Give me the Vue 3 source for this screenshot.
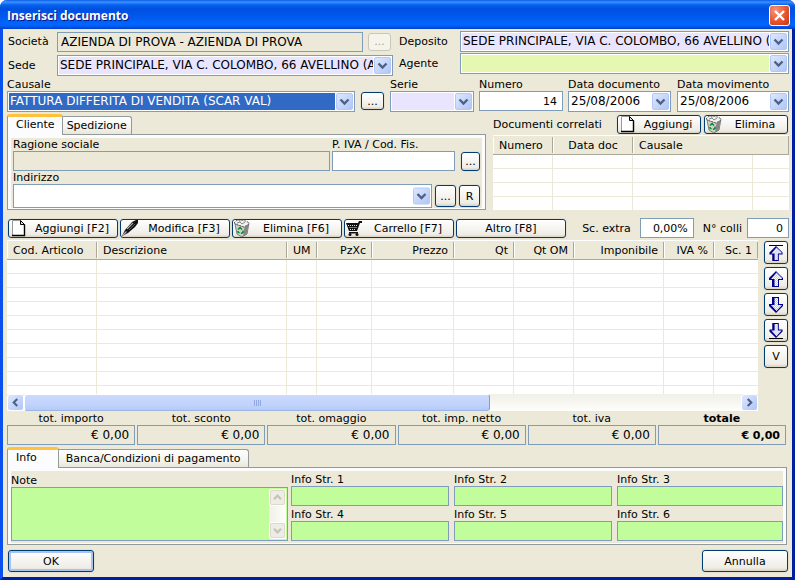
<script setup>
import { ref } from 'vue'

const company = ref('AZIENDA DI PROVA - AZIENDA DI PROVA')
const number = ref('14')
const extraDiscount = ref('0,00%')
const parcels = ref('0')
const notes = ref('')

const tools = [
  { text: 'Aggiungi [F2]', icon: 'page' },
  { text: 'Modifica [F3]', icon: 'pen' },
  { text: 'Elimina [F6]', icon: 'bin' },
  { text: 'Carrello [F7]', icon: 'cart' },
  { text: 'Altro [F8]', icon: '' }
]

const columns = [
  { text: 'Cod. Articolo', size: 'w90', align: 'left' },
  { text: 'Descrizione', size: '', align: 'left' },
  { text: 'UM', size: 'w30', align: 'left' },
  { text: 'PzXc', size: 'w55', align: 'right' },
  { text: 'Prezzo', size: 'w82', align: 'right' },
  { text: 'Qt', size: 'w60', align: 'right' },
  { text: 'Qt OM', size: 'w60', align: 'right' },
  { text: 'Imponibile', size: 'w90', align: 'right' },
  { text: 'IVA %', size: 'w50', align: 'right' },
  { text: 'Sc. 1', size: 'w44', align: 'right' }
]

const movers = [
  { icon: 'first', label: 'Sposta in cima' },
  { icon: 'up', label: 'Sposta su' },
  { icon: 'down', label: 'Sposta giù' },
  { icon: 'last', label: 'Sposta in fondo' }
]

const totals = [
  { id: 'importo', text: 'tot. importo' },
  { id: 'sconto', text: 'tot. sconto' },
  { id: 'omaggio', text: 'tot. omaggio' },
  { id: 'netto', text: 'tot. imp. netto' },
  { id: 'iva', text: 'tot. iva' },
  { id: 'totale', text: 'totale', strong: true }
]
</script>

<template>
  <svg class="sprites" aria-hidden="true">
    <symbol id="page" viewBox="0 0 18 18">
      <path d="M3.500 1.500h8l4 4v11h-12z" fill="#fff" stroke="#9a9a9a" />
      <path d="M11.500 1.500v4h4z" fill="#ddd" stroke="#000" />
      <path d="M15.500 5.500v11H3" fill="none" stroke="#000" stroke-width="1.400" />
    </symbol>
    <symbol id="pen" viewBox="0 0 18 18">
      <path d="M1 17l3-6 7-8 4-2h2v3l-3 4-7 6z" fill="#111" />
      <path d="M6 10l6-6M1.500 16.500l4-4" stroke="#aaa" stroke-width="1.200" />
      <path d="M8 11l6-6" stroke="#555" />
    </symbol>
    <symbol id="bin" viewBox="0 0 18 18">
      <path d="M2 5l9 3 5-4-2 11-5 3-5-3z" fill="#d0d0d0" stroke="#666" stroke-width=".8" />
      <path d="M11.500 8l4-3.500-1.500 10-4 3z" fill="#858585" />
      <path d="M1 4l3-3 3 1 3-1 5 2 1 2-5 3-6-2z" fill="#f0f0f0" stroke="#555" stroke-width=".9" stroke-dasharray="2 1" />
      <path d="M4 4l3-1 2 2 3-2" fill="none" stroke="#888" />
      <path d="M5 10.500l2-2 2 2M10 11.500v2l-2 1M6.500 14l-1.500-1v-1" fill="none" stroke="#00931c" stroke-width="1.500" />
    </symbol>
    <symbol id="cart" viewBox="0 0 18 18">
      <path d="M1 4h12l1-2h3v2h-2l-3 8H4z" fill="#111" />
      <path d="M3 6.500h9M4.500 8.500h7M5 10.500h6" stroke="#ddd" stroke-dasharray="1 1" />
      <path d="M4 13h9v1.500H4z" fill="#111" />
      <circle cx="5" cy="15.500" r="1.500" fill="#111" /><circle cx="12" cy="15.500" r="1.500" fill="#111" />
    </symbol>
    <pattern id="dither" width="2" height="2" patternUnits="userSpaceOnUse">
      <rect width="2" height="2" fill="#fff" />
      <path d="M0 0h1v1H0zM1 1h1v1H1z" fill="#c4c4dc" />
    </pattern>
    <symbol id="up" viewBox="0 0 16 16">
      <path d="M8 0l7 7v2h-4v7H4V9H1V7z" fill="#000090" />
      <path d="M8.500 1.500L14 7v1h-4v7H6.500V8H3z" fill="url(#dither)" />
    </symbol>
    <symbol id="down" viewBox="0 0 16 16">
      <path d="M4 0h7v7h4v2l-7 7-7-7V7h3z" fill="#000090" />
      <path d="M6.500 1H10v7h4l-5.500 6L3 8h3.500z" fill="url(#dither)" />
    </symbol>
    <symbol id="first" viewBox="0 0 16 16">
      <use href="#up" y="1" width="16" height="15" /><path d="M1 .5h14" stroke="#000" />
    </symbol>
    <symbol id="last" viewBox="0 0 16 16">
      <use href="#down" width="16" height="15" /><path d="M1 15.500h14" stroke="#000" />
    </symbol>
    <symbol id="drop" viewBox="0 0 17 17">
      <rect x=".5" y=".5" width="16" height="16" rx="1.500" fill="url(#blue)" stroke="#b4c8f6" />
      <path d="M4.500 6.500l4 4 4-4" fill="none" stroke="#4d6185" stroke-width="2.400" />
    </symbol>
    <linearGradient id="blue" x2="1" y2="1">
      <stop stop-color="#dfe8ff" /><stop offset="1" stop-color="#aec5f7" />
    </linearGradient>
  </svg>

  <main class="window">
    <header class="title">
      <h1>Inserisci documento</h1>
      <button class="close" aria-label="Chiudi">
        <svg viewBox="0 0 19 19"><path d="M5 5l9 9M14 5l-9 9" stroke="#fff" stroke-width="2.400" /></svg>
      </button>
    </header>

    <div class="body">
      <section class="top">
        <div class="seat">
          <label for="company">Società</label>
          <div class="line">
            <input id="company" v-model="company" class="box flat" readonly />
            <button class="btn dots" disabled>...</button>
          </div>
          <label for="seat">Sede</label>
          <span class="combo lilac">
            <select id="seat"><option>SEDE PRINCIPALE, VIA C. COLOMBO, 66 AVELLINO (AV)</option></select>
            <svg><use href="#drop" /></svg>
          </span>
        </div>
        <div class="depot">
          <label for="depot">Deposito</label>
          <span class="combo lilac">
            <select id="depot"><option>SEDE PRINCIPALE, VIA C. COLOMBO, 66 AVELLINO (AV)</option></select>
            <svg><use href="#drop" /></svg>
          </span>
          <label for="agent">Agente</label>
          <span class="combo lime">
            <select id="agent"><option></option></select>
            <svg><use href="#drop" /></svg>
          </span>
        </div>
      </section>

      <section class="heads">
        <div class="field">
          <label for="reason">Causale</label>
          <span class="combo picked">
            <select id="reason"><option>FATTURA DIFFERITA DI VENDITA (SCAR VAL)</option></select>
            <svg><use href="#drop" /></svg>
          </span>
        </div>
        <button class="btn dots">...</button>
        <div class="field inset">
          <label for="series">Serie</label>
          <span class="combo lilac">
            <select id="series"><option></option></select>
            <svg><use href="#drop" /></svg>
          </span>
        </div>
        <div class="field">
          <label for="number">Numero</label>
          <input id="number" v-model="number" class="box num" />
        </div>
        <div class="field">
          <label for="docdate">Data documento</label>
          <span class="combo">
            <select id="docdate"><option>25/08/2006</option></select>
            <svg><use href="#drop" /></svg>
          </span>
        </div>
        <div class="field inset">
          <label for="movdate">Data movimento</label>
          <span class="combo">
            <select id="movdate"><option>25/08/2006</option></select>
            <svg><use href="#drop" /></svg>
          </span>
        </div>
      </section>

      <section class="middle">
        <div>
          <div class="tabs" role="tablist">
            <button class="tab on" role="tab" aria-selected="true">Cliente</button>
            <button class="tab" role="tab" aria-selected="false">Spedizione</button>
          </div>
          <div class="pane">
            <div class="inner client">
              <div class="client-row">
                <div class="field">
                  <label for="name">Ragione sociale</label>
                  <input id="name" class="box flat" readonly />
                </div>
                <div class="field">
                  <label for="vat">P. IVA / Cod. Fis.</label>
                  <input id="vat" class="box" />
                </div>
                <button class="btn square">...</button>
              </div>
              <label for="address">Indirizzo</label>
              <div class="address-row">
                <span class="combo">
                  <select id="address"><option></option></select>
                  <svg><use href="#drop" /></svg>
                </span>
                <button class="btn">...</button>
                <button class="btn">R</button>
              </div>
            </div>
          </div>
        </div>

        <div class="related">
          <div class="related-head">
            <span>Documenti correlati</span>
            <button class="btn tool"><svg><use href="#page" /></svg><span>Aggiungi</span></button>
            <button class="btn tool"><svg><use href="#bin" /></svg><span>Elimina</span></button>
          </div>
          <table>
            <colgroup><col class="w60" /><col class="w80" /><col /><col class="w36" /></colgroup>
            <thead>
              <tr>
                <th class="left">Numero</th>
                <th class="center">Data doc</th>
                <th class="left joined">Causale</th>
                <th></th>
              </tr>
            </thead>
            <tbody>
              <tr v-for="r in 4" :key="r"><td v-for="c in 4" :key="c"></td></tr>
            </tbody>
          </table>
        </div>
      </section>

      <section class="tools">
        <button v-for="t in tools" :key="t.text" class="btn tool">
          <svg v-if="t.icon"><use :href="'#' + t.icon" /></svg><span>{{ t.text }}</span>
        </button>
        <label for="extra" class="push">Sc. extra</label>
        <input id="extra" v-model="extraDiscount" class="box num extra" />
        <label for="parcels">N° colli</label>
        <input id="parcels" v-model="parcels" class="box num parcels" />
      </section>

      <section class="items">
        <div class="grid">
          <div class="view">
            <table>
              <colgroup><col v-for="c in columns" :key="c.text" :class="c.size" /></colgroup>
              <thead>
                <tr><th v-for="c in columns" :key="c.text" :class="c.align">{{ c.text }}</th></tr>
              </thead>
              <tbody>
                <tr v-for="r in 10" :key="r"><td v-for="c in columns" :key="c.text"></td></tr>
              </tbody>
            </table>
          </div>
          <div class="scroll">
            <button class="step" aria-label="Scorri a sinistra">
              <svg viewBox="0 0 17 17"><path d="M10.500 4.500l-4 4 4 4" /></svg>
            </button>
            <div class="track"><div class="thumb"><i></i><i></i><i></i><i></i></div></div>
            <button class="step" aria-label="Scorri a destra">
              <svg viewBox="0 0 17 17"><path d="M6.500 4.500l4 4-4 4" /></svg>
            </button>
          </div>
        </div>
        <div class="movers">
          <button v-for="m in movers" :key="m.icon" class="btn" :aria-label="m.label">
            <svg><use :href="'#' + m.icon" /></svg>
          </button>
          <button class="btn">V</button>
        </div>
      </section>

      <section class="totals">
        <div v-for="t in totals" :key="t.id" class="field" :class="{ strong: t.strong }">
          <label :for="t.id">{{ t.text }}</label>
          <input :id="t.id" class="box flat" value="€ 0,00" readonly />
        </div>
      </section>

      <section class="extras">
        <div class="tabs" role="tablist">
          <button class="tab on" role="tab" aria-selected="true">Info</button>
          <button class="tab" role="tab" aria-selected="false">Banca/Condizioni di pagamento</button>
        </div>
        <div class="pane">
          <div class="inner info">
            <div class="field note">
              <label for="note">Note</label>
              <div class="area">
                <textarea id="note" v-model="notes"></textarea>
                <div class="vscroll" aria-hidden="true">
                  <svg viewBox="0 0 17 17"><path d="M4.500 10.500l4-4 4 4" /></svg>
                  <svg viewBox="0 0 17 17"><path d="M4.500 6.500l4 4 4-4" /></svg>
                </div>
              </div>
            </div>
            <div class="strings">
              <div v-for="n in 6" :key="n" class="field">
                <label :for="'str' + n">Info Str. {{ n }}</label>
                <input :id="'str' + n" class="box green" />
              </div>
            </div>
          </div>
        </div>
      </section>

      <footer>
        <button class="btn default">OK</button>
        <button class="btn">Annulla</button>
      </footer>
    </div>
  </main>
</template>

<style>
body {
  background: #fff;
}
</style>

<style scoped>
* {
  box-sizing: border-box;
}
.sprites {
  position: absolute;
  width: 0;
  height: 0;
}
.window,
button,
input,
select,
textarea {
  font: 11px/13px Verdana, "DejaVu Sans", sans-serif;
  color: #000;
}
button,
input,
select,
textarea {
  margin: 0;
  padding: 0;
  min-width: 0;
  border: 0;
  border-radius: 0;
  outline: 0;
}
input,
select,
textarea {
  font-size: 12px;
}
label,
span {
  white-space: nowrap;
}
.window {
  background: #ece9d8;
  border: solid #0a3fe0;
  border-width: 0 3px 3px;
  border-color: #0a3fe0 #001ea0 #001ea0 #0a50ee;
  border-radius: 7px 7px 0 0;
}
.title {
  display: flex;
  align-items: center;
  justify-content: space-between;
  height: 29px;
  margin: 0 -3px;
  padding: 2px 5px 0 7px;
  border-radius: 7px 7px 0 0;
  background: linear-gradient(#0a5be8 0, #3a92ff 2px, #0560ee 5px, #0050e0 9px, #0059ef 17px, #0066ff 24px, #0060f8 26px, #003dc4 29px);
}
h1 {
  margin: 0;
  font: bold 12px/18px "Open Sans", sans-serif;
  color: #fff;
  text-shadow: 1px 1px 0 #0a1883;
}
.close {
  width: 21px;
  height: 21px;
  border: 1px solid #fff;
  border-radius: 3px;
  background: radial-gradient(circle at 30% 25%, #f0977c, #e2512c 60%, #c23b12);
}
.close svg {
  display: block;
  width: 19px;
  height: 19px;
}
.body {
  padding: 2px 3px 5px 4px;
}

/* text boxes and drop-downs */
.box {
  display: block;
  width: 100%;
  height: 20px;
  padding: 0 3px;
  border: 1px solid #7f9db9;
  background: #fff;
}
.box.flat {
  background: #ece9d8;
}
.box.green {
  background: #c1fd9b;
}
.num {
  padding-right: 5px;
  font-size: 11px;
  text-align: right;
}
.combo {
  display: grid;
  grid-template-columns: 1fr 18px;
  height: 21px;
  padding: 1px;
  border: 1px solid #7f9db9;
  background: #fff;
}
.combo select {
  grid-area: 1 / 1 / 2 / 3;
  appearance: none;
  width: 100%;
  height: 100%;
  padding: 0 18px 0 1px;
  background: #fff;
}
.combo svg {
  grid-area: 1 / 2;
  width: 18px;
  height: 100%;
  padding-left: 1px;
  background: #fff;
  pointer-events: none;
}
.combo.lilac select {
  background: #e9e5ff;
}
.combo.lime select {
  background: #e5f7b1;
}
.combo.picked select {
  background: #316ac5;
  color: #fff;
}
.btn {
  display: flex;
  align-items: center;
  justify-content: center;
  border: 1px solid #003c74;
  border-radius: 3px;
  background: linear-gradient(#fff, #f5f4f0 50%, #eeece4 85%, #d8d1c3);
  box-shadow: 0 0 0 1px #e3e0d0;
}
.btn:disabled {
  border-color: #c9c7ba;
  background: #f5f4ea;
  color: #a1a192;
  box-shadow: none;
}
.dots {
  flex: none;
  width: 23px;
  height: 18px;
}
.field {
  min-width: 0;
}
.field > label {
  display: block;
}

/* first rows */
.top {
  display: grid;
  grid-template-columns: 386fr 390fr;
  column-gap: 6px;
}
.seat,
.depot {
  display: grid;
  grid-template-rows: 21px 21px;
  align-content: start;
  align-items: center;
}
.seat {
  grid-template-columns: 50px minmax(0, 1fr);
  row-gap: 3px;
}
.seat label {
  padding-left: 1px;
}
.depot {
  grid-template-columns: 61px minmax(0, 1fr);
  row-gap: 1px;
}
.line {
  display: flex;
  align-items: center;
  gap: 5px;
  padding-right: 2px;
}
.heads {
  display: grid;
  grid-template-columns: minmax(0, 1fr) 24px 85px 84px 103px 113px;
  column-gap: 5px;
  align-items: start;
  margin-top: 2px;
}
.heads .dots {
  margin: 14px 0 0 1px;
}
.inset {
  padding-left: 1px;
}

/* tabs */
.middle {
  display: grid;
  grid-template-columns: minmax(0, 479fr) minmax(0, 296fr);
  column-gap: 7px;
  margin-top: 2px;
}
.tabs {
  display: flex;
  align-items: flex-end;
  height: 20px;
}
.tab {
  height: 18px;
  padding: 0 4px;
  border: 1px solid #919b9c;
  border-bottom: 0;
  border-left-width: 0;
  border-radius: 0 3px 0 0;
  background: linear-gradient(#fff, #f4f3ec 60%, #e9e7dc);
  white-space: nowrap;
}
.tab.on {
  position: relative;
  height: 21px;
  margin-bottom: -1px;
  padding: 0 7px 3px 8px;
  border-left-width: 1px;
  border-top: 3px solid #ffc23a;
  border-radius: 3px 3px 0 0;
  background: #fcfcfe;
}
.extras .tab {
  padding: 0 7px;
}
.extras .tab.on {
  padding: 0 21px 3px 8px;
}
.pane {
  padding: 3px 3px 1px;
  border: 1px solid #919b9c;
  background: #fcfcfe;
}
.inner {
  background: #ece9d8;
}
.client {
  padding: 0 2px;
}
.client label {
  display: block;
}
.client-row {
  display: grid;
  grid-template-columns: minmax(0, 1fr) 123px 23px;
  column-gap: 2px;
  align-items: end;
}
.square {
  height: 19px;
  margin-left: 4px;
}
.address-row {
  display: grid;
  grid-template-columns: minmax(0, 1fr) 21px 21px;
  column-gap: 3px;
  align-items: center;
}
.address-row .combo {
  height: 24px;
}
.address-row .btn {
  height: 22px;
}

/* tables */
.related-head {
  display: grid;
  grid-template-columns: minmax(0, 1fr) 84px 84px;
  column-gap: 3px;
  align-items: center;
  height: 20px;
  padding-right: 1px;
}
table {
  width: 100%;
  table-layout: fixed;
  border-collapse: separate;
  border-spacing: 0;
  background: #fff;
}
th {
  height: 20px;
  padding: 0 6px;
  border-top: 1px solid #fff;
  border-bottom: 1px solid #aca899;
  background: linear-gradient(#aca899, #aca899) right center / 1px 16px no-repeat, linear-gradient(#fff, #fff) left center / 1px 16px no-repeat, #ece9d8;
  font-weight: normal;
  white-space: nowrap;
}
th.joined {
  background: linear-gradient(#fff, #fff) left center / 1px 16px no-repeat, #ece9d8;
}
th.joined + th {
  background: linear-gradient(#aca899, #aca899) right center / 1px 100% no-repeat, #ece9d8;
}
td {
  height: 14px;
  padding: 0;
  border: solid #ece9d8;
  border-width: 0 1px 1px 0;
}
td:last-child {
  border-right: 0;
}
.left {
  text-align: left;
}
.center {
  text-align: center;
}
.right {
  text-align: right;
}
.related table {
  margin-top: 1px;
}
.w30 { width: 30px; }
.w36 { width: 36px; }
.w44 { width: 44px; }
.w50 { width: 50px; }
.w55 { width: 55px; }
.w60 { width: 60px; }
.w80 { width: 80px; }
.w82 { width: 82px; }
.w90 { width: 90px; }

/* command bar */
.tool {
  height: 19px;
}
.tool svg {
  flex: none;
  width: 18px;
  height: 18px;
}
.tool span {
  flex: 1;
  text-align: center;
}
.tools {
  display: flex;
  align-items: center;
  gap: 2px;
  height: 20px;
  margin-top: 7px;
  padding-left: 1px;
}
.tools .tool {
  width: 110px;
}
.push {
  margin-left: auto;
}
.extra {
  width: 54px;
  margin: 0 7px;
}
.parcels {
  width: 42px;
  margin-left: 3px;
}

/* item grid */
.items {
  display: grid;
  grid-template-columns: minmax(0, 1fr) 24px;
  column-gap: 6px;
  margin-top: 2px;
  padding-right: 1px;
}
.view {
  height: 154px;
  overflow: hidden;
}
.scroll {
  display: flex;
  height: 17px;
  background: linear-gradient(#f0efe8, #fefefb);
}
.step {
  width: 17px;
  height: 17px;
  border: 1px solid #fff;
  border-radius: 3px;
  background: linear-gradient(135deg, #dfe8ff, #aec5f7);
}
.step svg {
  display: block;
  width: 15px;
  height: 15px;
}
.step path {
  fill: none;
  stroke: #4d6185;
  stroke-width: 2.4;
}
.track {
  flex: 1;
}
.thumb {
  display: flex;
  align-items: center;
  justify-content: center;
  gap: 1px;
  width: 65%;
  height: 17px;
  border: 1px solid #fff;
  border-right-color: #7f9dd0;
  border-bottom-color: #9db5e0;
  border-radius: 3px;
  background: linear-gradient(#cbdafe, #c2d3fc 60%, #b3cbfa);
}
.thumb i {
  width: 1px;
  height: 6px;
  background: #8fa9e0;
}
.movers {
  display: grid;
  grid-auto-rows: 23px;
  row-gap: 3px;
  align-content: start;
  padding-top: 1px;
}
.movers svg {
  width: 16px;
  height: 16px;
}

/* totals */
.totals {
  display: grid;
  grid-template-columns: repeat(6, minmax(0, 1fr));
  column-gap: 2px;
  margin-top: 1px;
  padding-right: 3px;
}
.totals label {
  text-align: center;
}
.totals .box {
  padding-right: 5px;
  text-align: right;
}
.strong label,
.strong .box {
  font-weight: bold;
}
.strong .box {
  font-size: 11px;
}

/* notes and free fields */
.extras {
  margin-top: 2px;
  padding-right: 2px;
}
.info {
  display: grid;
  grid-template-columns: minmax(0, 277fr) minmax(0, 492fr);
  column-gap: 3px;
  padding-bottom: 2px;
}
.note {
  padding-top: 3px;
}
.area {
  position: relative;
  height: 54px;
}
textarea {
  display: block;
  width: 100%;
  height: 100%;
  padding: 2px 20px 2px 2px;
  border: 1px solid #7f9db9;
  background: #c1fd9b;
  resize: none;
  overflow: hidden;
}
.vscroll {
  position: absolute;
  top: 2px;
  right: 2px;
  bottom: 2px;
  display: flex;
  flex-direction: column;
  justify-content: space-between;
  width: 17px;
  background: linear-gradient(90deg, #f0efe8, #fefefb);
}
.vscroll svg {
  width: 17px;
  height: 17px;
  border: 1px solid #fff;
  border-radius: 3px;
  outline: 1px solid #dddacb;
  outline-offset: -2px;
  background: #eeede5;
}
.vscroll path {
  fill: none;
  stroke: #c6c4b8;
  stroke-width: 2.6;
}
.strings {
  display: grid;
  grid-template-columns: 158fr 158fr 166fr;
  gap: 2px 5px;
  padding-top: 2px;
}
footer {
  display: flex;
  justify-content: space-between;
  margin-top: 5px;
  padding: 0 1px;
}
footer .btn {
  width: 86px;
  height: 22px;
}
.default {
  box-shadow: 0 0 0 1px #e3e0d0, inset 0 0 0 2px #a9c3f0;
}
</style>
